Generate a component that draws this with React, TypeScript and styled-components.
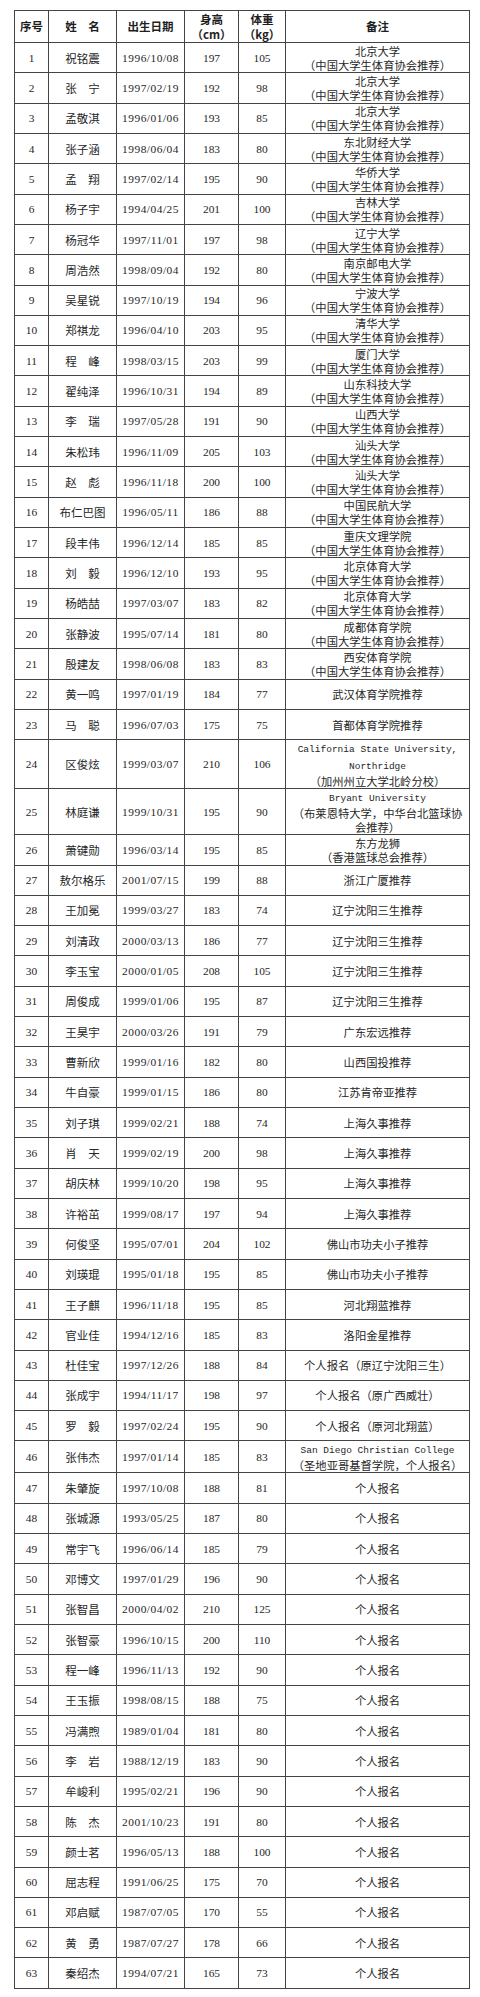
import React from 'react';
import styled, { createGlobalStyle } from 'styled-components';

const GlobalStyle = createGlobalStyle`
  html, body {
    margin: 0;
    padding: 0;
    background: #ffffff;
  }
`;

const Sheet = styled.div`
  padding: 10px 0 16px 14px;
`;

const Table = styled.table`
  width: 455px;
  border-collapse: collapse;
  table-layout: fixed;
  color: #262626;
`;

const Col = styled.col<{ $w: number }>`
  width: ${props => props.$w}px;
`;

const HeadRow = styled.tr`
  height: 32px;
`;

const Row = styled.tr<{ $tall?: boolean }>`
  height: ${props => props.$tall ? 44.8 : 30.32}px;
`;

const HeadCell = styled.th`
  border: 1px solid #444;
  padding: 0;
  text-align: center;
  vertical-align: middle;
  font-family: "Noto Sans CJK SC", sans-serif;
  font-size: 11.5px;
  font-weight: 700;
  line-height: 15px;
  color: #1e1e1e;
`;

const Cell = styled.td<{ $kind: 'num' | 'date' | 'name' | 'note' }>`
  border: 1px solid #444;
  padding: 0 2px;
  text-align: center;
  vertical-align: middle;
  white-space: nowrap;
  font-family: ${props => props.$kind === 'name' || props.$kind === 'note'
    ? '"Noto Sans CJK SC", sans-serif'
    : '"Liberation Serif", serif'};
  font-size: ${props => props.$kind === 'name' ? 11.5 : props.$kind === 'note' ? 11.3 : 11.4}px;
  letter-spacing: ${props => props.$kind === 'date' ? 0.5 : 0}px;
  line-height: 14px;
`;

const Latin = styled.span`
  font-family: "Liberation Mono", monospace;
  font-size: 9.5px;
`;

type Player = [number, string, string, number, number, string];

const CUBA = '\n（中国大学生体育协会推荐）';
const SOLO = '个人报名';

const players: Player[] = [
  [1, '祝铭震', '1996/10/08', 197, 105, '北京大学' + CUBA],
  [2, '张　宁', '1997/02/19', 192, 98, '北京大学' + CUBA],
  [3, '孟敬淇', '1996/01/06', 193, 85, '北京大学' + CUBA],
  [4, '张子涵', '1998/06/04', 183, 80, '东北财经大学' + CUBA],
  [5, '孟　翔', '1997/02/14', 195, 90, '华侨大学' + CUBA],
  [6, '杨子宇', '1994/04/25', 201, 100, '吉林大学' + CUBA],
  [7, '杨冠华', '1997/11/01', 197, 98, '辽宁大学' + CUBA],
  [8, '周浩然', '1998/09/04', 192, 80, '南京邮电大学' + CUBA],
  [9, '吴星锐', '1997/10/19', 194, 96, '宁波大学' + CUBA],
  [10, '郑祺龙', '1996/04/10', 203, 95, '清华大学' + CUBA],
  [11, '程　峰', '1998/03/15', 203, 99, '厦门大学' + CUBA],
  [12, '翟纯泽', '1996/10/31', 194, 89, '山东科技大学' + CUBA],
  [13, '李　瑞', '1997/05/28', 191, 90, '山西大学' + CUBA],
  [14, '朱松玮', '1996/11/09', 205, 103, '汕头大学' + CUBA],
  [15, '赵　彪', '1996/11/18', 200, 100, '汕头大学' + CUBA],
  [16, '布仁巴图', '1996/05/11', 186, 88, '中国民航大学' + CUBA],
  [17, '段丰伟', '1996/12/14', 185, 85, '重庆文理学院' + CUBA],
  [18, '刘　毅', '1996/12/10', 193, 95, '北京体育大学' + CUBA],
  [19, '杨皓喆', '1997/03/07', 183, 82, '北京体育大学' + CUBA],
  [20, '张静波', '1995/07/14', 181, 80, '成都体育学院' + CUBA],
  [21, '殷建友', '1998/06/08', 183, 83, '西安体育学院' + CUBA],
  [22, '黄一鸣', '1997/01/19', 184, 77, '武汉体育学院推荐'],
  [23, '马　聪', '1996/07/03', 175, 75, '首都体育学院推荐'],
  [24, '区俊炫', '1999/03/07', 210, 106, 'California State University,\nNorthridge\n（加州州立大学北岭分校）'],
  [25, '林庭谦', '1999/10/31', 195, 90, 'Bryant University\n（布莱恩特大学，中华台北篮球协\n会推荐）'],
  [26, '萧键勋', '1996/03/14', 195, 85, '东方龙狮\n（香港篮球总会推荐）'],
  [27, '敖尔格乐', '2001/07/15', 199, 88, '浙江广厦推荐'],
  [28, '王加冕', '1999/03/27', 183, 74, '辽宁沈阳三生推荐'],
  [29, '刘清政', '2000/03/13', 186, 77, '辽宁沈阳三生推荐'],
  [30, '李玉宝', '2000/01/05', 208, 105, '辽宁沈阳三生推荐'],
  [31, '周俊成', '1999/01/06', 195, 87, '辽宁沈阳三生推荐'],
  [32, '王昊宇', '2000/03/26', 191, 79, '广东宏远推荐'],
  [33, '曹新欣', '1999/01/16', 182, 80, '山西国投推荐'],
  [34, '牛自豪', '1999/01/15', 186, 80, '江苏肯帝亚推荐'],
  [35, '刘子琪', '1999/02/21', 188, 74, '上海久事推荐'],
  [36, '肖　天', '1999/02/19', 200, 98, '上海久事推荐'],
  [37, '胡庆林', '1999/10/20', 198, 95, '上海久事推荐'],
  [38, '许裕茁', '1999/08/17', 197, 94, '上海久事推荐'],
  [39, '何俊坚', '1995/07/01', 204, 102, '佛山市功夫小子推荐'],
  [40, '刘瑛琨', '1995/01/18', 195, 85, '佛山市功夫小子推荐'],
  [41, '王子麒', '1996/11/18', 195, 85, '河北翔蓝推荐'],
  [42, '官业佳', '1994/12/16', 185, 83, '洛阳金星推荐'],
  [43, '杜佳宝', '1997/12/26', 188, 84, '个人报名（原辽宁沈阳三生）'],
  [44, '张成宇', '1994/11/17', 198, 97, '个人报名（原广西威壮）'],
  [45, '罗　毅', '1997/02/24', 195, 90, '个人报名（原河北翔蓝）'],
  [46, '张伟杰', '1997/01/14', 185, 83, 'San Diego Christian College\n（圣地亚哥基督学院，个人报名）'],
  [47, '朱肇旋', '1997/10/08', 188, 81, SOLO],
  [48, '张城源', '1993/05/25', 187, 80, SOLO],
  [49, '常宇飞', '1996/06/14', 185, 79, SOLO],
  [50, '邓博文', '1997/01/29', 196, 90, SOLO],
  [51, '张智昌', '2000/04/02', 210, 125, SOLO],
  [52, '张智豪', '1996/10/15', 200, 110, SOLO],
  [53, '程一峰', '1996/11/13', 192, 90, SOLO],
  [54, '王玉振', '1998/08/15', 188, 75, SOLO],
  [55, '冯满煦', '1989/01/04', 181, 80, SOLO],
  [56, '李　岩', '1988/12/19', 183, 90, SOLO],
  [57, '牟峻利', '1995/02/21', 196, 90, SOLO],
  [58, '陈　杰', '2001/10/23', 191, 80, SOLO],
  [59, '颜士茗', '1996/05/13', 188, 100, SOLO],
  [60, '屈志程', '1991/06/25', 175, 70, SOLO],
  [61, '邓启赋', '1987/07/05', 170, 55, SOLO],
  [62, '黄　勇', '1987/07/27', 178, 66, SOLO],
  [63, '秦绍杰', '1994/07/21', 165, 73, SOLO],
];

const COLUMNS = [34, 68, 68, 54, 47, 184];

const isLatin = (line: string) => /^[\x20-\x7e]+$/.test(line);

const renderNote = (note: string) => {
  const lines = note.split('\n');
  return lines.map((line, i) => (
    <React.Fragment key={i}>
      {isLatin(line) ? <Latin>{line}</Latin> : line}
      {i < lines.length - 1 && <br />}
    </React.Fragment>
  ));
};

const App = () => {
  return (
    <>
      <GlobalStyle />
      <Sheet>
        <Table>
          <colgroup>
            {COLUMNS.map((w, i) => <Col key={i} $w={w} />)}
          </colgroup>
          <thead>
            <HeadRow>
              <HeadCell>序号</HeadCell>
              <HeadCell>姓　名</HeadCell>
              <HeadCell>出生日期</HeadCell>
              <HeadCell>身高<br />（cm）</HeadCell>
              <HeadCell>体重<br />（kg）</HeadCell>
              <HeadCell>备注</HeadCell>
            </HeadRow>
          </thead>
          <tbody>
            {players.map(([no, name, born, height, weight, note]) => (
              <Row key={no} $tall={note.split('\n').length > 2}>
                <Cell $kind="num">{no}</Cell>
                <Cell $kind="name">{name}</Cell>
                <Cell $kind="date">{born}</Cell>
                <Cell $kind="num">{height}</Cell>
                <Cell $kind="num">{weight}</Cell>
                <Cell $kind="note">{renderNote(note)}</Cell>
              </Row>
            ))}
          </tbody>
        </Table>
      </Sheet>
    </>
  );
};

export default App;
